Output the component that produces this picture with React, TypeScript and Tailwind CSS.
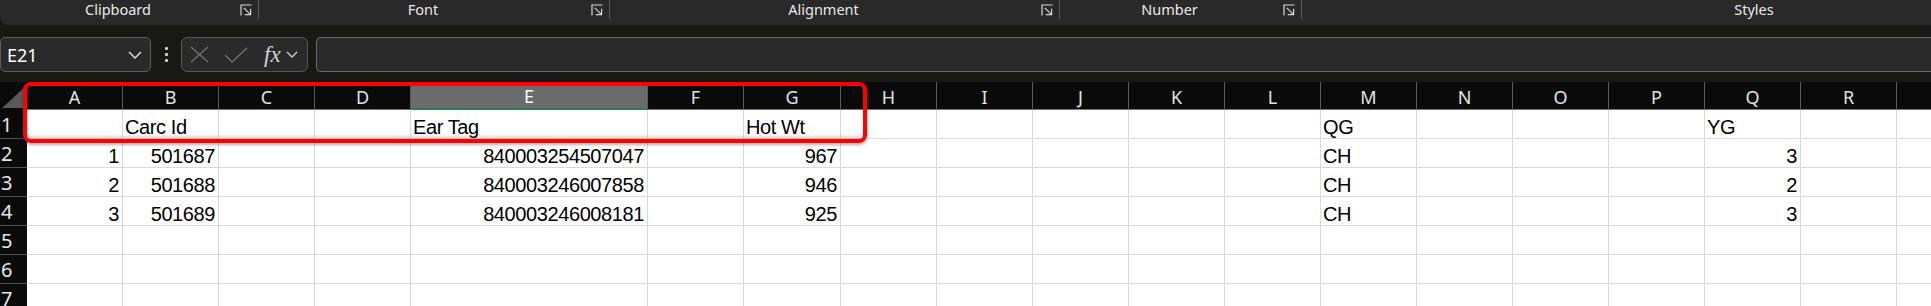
import React from "react";

type Col = { l: string; w: string; hide?: boolean };

const COLS: Col[] = [
  { l: "A", w: "w-[96px]" },
  { l: "B", w: "w-[96px]" },
  { l: "C", w: "w-[96px]" },
  { l: "D", w: "w-[96px]" },
  { l: "E", w: "w-[237px]" },
  { l: "F", w: "w-[96px]" },
  { l: "G", w: "w-[97px]" },
  { l: "H", w: "w-[96px]" },
  { l: "I", w: "w-[96px]" },
  { l: "J", w: "w-[96px]" },
  { l: "K", w: "w-[96px]" },
  { l: "L", w: "w-[96px]" },
  { l: "M", w: "w-[96px]" },
  { l: "N", w: "w-[96px]" },
  { l: "O", w: "w-[96px]" },
  { l: "P", w: "w-[96px]" },
  { l: "Q", w: "w-[96px]" },
  { l: "R", w: "w-[96px]" },
  { l: "S", w: "w-[96px]", hide: true },
];

type Cell = { v: string; r?: boolean };
type Row = Record<string, Cell>;

const ROWS: Row[] = [
  { B: { v: "Carc Id" }, E: { v: "Ear Tag" }, G: { v: "Hot Wt" }, M: { v: "QG" }, Q: { v: "YG" } },
  { A: { v: "1", r: true }, B: { v: "501687", r: true }, E: { v: "840003254507047", r: true }, G: { v: "967", r: true }, M: { v: "CH" }, Q: { v: "3", r: true } },
  { A: { v: "2", r: true }, B: { v: "501688", r: true }, E: { v: "840003246007858", r: true }, G: { v: "946", r: true }, M: { v: "CH" }, Q: { v: "2", r: true } },
  { A: { v: "3", r: true }, B: { v: "501689", r: true }, E: { v: "840003246008181", r: true }, G: { v: "925", r: true }, M: { v: "CH" }, Q: { v: "3", r: true } },
  {},
  {},
  {},
];

function Launcher() {
  return (
    <svg width="12" height="12" viewBox="0 0 12 12" fill="none" stroke="#d6d6d6" strokeWidth="1.2">
      <path d="M1 11.5 V1 H11.5" />
      <path d="M3.8 3.8 L10.3 10.3" />
      <path d="M4.8 10.6 H10.6 V4.8" />
    </svg>
  );
}

function Group({ label, w, launcher = true }: { label: string; w: string; launcher?: boolean }) {
  return (
    <div className={`flex h-full shrink-0 ${w}`}>
      <div className="flex-1 text-center text-[14.5px] leading-[19px] text-[#e8e8e8]">{label}</div>
      {launcher && (
        <div className="w-[22px] pl-[4px] pt-[4px]">
          <Launcher />
        </div>
      )}
      {launcher && <div className="w-px h-[19px] bg-[#5c5c5c]" />}
    </div>
  );
}

export default function App() {
  return (
    <div className="relative w-[1931px] h-[306px] overflow-hidden bg-[#181814] font-['Noto_Sans',sans-serif]">
      {/* Ribbon group labels */}
      <div className="h-[25px] w-[2300px] bg-[#292929] rounded-bl-[8px] flex">
        <Group label="Clipboard" w="w-[259px]" />
        <Group label="Font" w="w-[351px]" />
        <Group label="Alignment" w="w-[450px]" />
        <Group label="Number" w="w-[242px]" />
        <Group label="Styles" w="w-[904px]" launcher={false} />
      </div>

      {/* Formula bar */}
      <div className="h-[57px] flex items-start pt-[12px]">
        <div className="w-[151px] h-[35px] shrink-0 rounded-[5px] border border-[#5d5d5d] bg-[#2a2a2a] flex items-center justify-between pl-[6px] pr-[8px]">
          <span className="text-[18px] leading-[20px] text-white">E21</span>
          <svg width="14" height="8" viewBox="0 0 14 8" fill="none" stroke="#d8d8d8" strokeWidth="1.5">
            <path d="M1 1 L7 7 L13 1" />
          </svg>
        </div>
        <div className="w-[30px] h-[35px] shrink-0 flex flex-col items-center justify-center gap-[3px]">
          <div className="w-[3px] h-[3px] rounded-[1px] bg-[#d0d0d0]" />
          <div className="w-[3px] h-[3px] rounded-[1px] bg-[#d0d0d0]" />
          <div className="w-[3px] h-[3px] rounded-[1px] bg-[#d0d0d0]" />
        </div>
        <div className="w-[127px] h-[35px] shrink-0 rounded-[6px] border border-[#555555] bg-[#2a2a2a] flex items-center pl-[8px]">
          <svg width="19" height="17" viewBox="0 0 19 17" fill="none" stroke="#707070" strokeWidth="1.4">
            <path d="M1 1 L18 16 M18 1 L1 16" />
          </svg>
          <svg className="ml-[15px]" width="24" height="16" viewBox="0 0 24 16" fill="none" stroke="#707070" strokeWidth="1.4">
            <path d="M1 8 L8 15 L23 1" />
          </svg>
          <span className="ml-[16px] font-['Liberation_Serif',serif] italic text-[23px] leading-[24px] text-[#d4d4d4]">fx</span>
          <svg className="ml-[5px]" width="12" height="7" viewBox="0 0 12 7" fill="none" stroke="#d0d0d0" strokeWidth="1.3">
            <path d="M1 1 L6 6 L11 1" />
          </svg>
        </div>
        <div className="ml-[8px] flex-1 h-[35px] rounded-l-[5px] border border-r-0 border-[#6b6b6b] bg-[#292929]" />
      </div>

      {/* Grid */}
      <div className="w-[2100px]">
        {/* column header */}
        <div className="flex h-[28px]">
          <div className="relative w-[27px] h-full shrink-0 bg-[#0a0a0a]">
            <svg className="absolute right-[1px] bottom-[2px]" width="24" height="22" viewBox="0 0 24 22">
              <path d="M24 0 L24 22 L0 22 Z" fill="#595959" />
            </svg>
          </div>
          {COLS.map((c) => (
            <div
              key={c.l}
              className={`${c.w} h-full shrink-0 flex items-end justify-center pb-[2px] border-r border-[#5a5a5a] text-[18px] leading-[20px] ${
                c.l === "E" ? "bg-[#6b6b6b] text-white border-b-2 border-b-[#2b8050]" : "bg-[#0a0a0a] text-[#e4e4e4] border-b border-b-[#777777]"
              }`}
            >
              {c.hide ? "" : c.l}
            </div>
          ))}
        </div>

        {ROWS.map((row, i) => (
          <div key={i} className="flex h-[29px]">
            <div className="w-[27px] h-full shrink-0 bg-[#0a0a0a] border-b border-[#4f4f4f] flex items-end pb-[3px] pl-[1px] text-[20px] leading-[20px] text-[#e6e6e6]">
              {i + 1}
            </div>
            {COLS.map((c) => {
              const cell = row[c.l];
              return (
                <div
                  key={c.l}
                  className={`${c.w} h-full shrink-0 bg-white border-r border-b border-[#dadada] flex items-end pb-[1px] pl-[2px] pr-[3px] font-['Liberation_Sans',Arial,sans-serif] text-[20px] leading-[20px] tracking-[-0.4px] text-black whitespace-nowrap ${
                    cell?.r ? "justify-end" : "justify-start"
                  }`}
                >
                  {cell?.v ?? ""}
                </div>
              );
            })}
          </div>
        ))}
      </div>

      {/* Red annotation box */}
      <div className="absolute left-[23px] top-[82px] w-[844px] h-[61px] rounded-[8px] border-[4px] border-[#ff0000] shadow-[0_2px_3px_rgba(0,0,0,0.3),inset_0_-3px_3px_rgba(0,0,0,0.15)]" />
    </div>
  );
}
